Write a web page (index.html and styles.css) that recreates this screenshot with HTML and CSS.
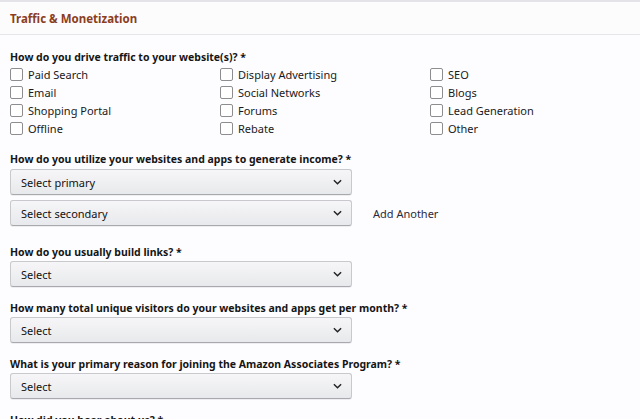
FILE: index.html
```html
<!DOCTYPE html>
<html>
<head>
<meta charset="utf-8">
<link rel="stylesheet" href="styles.css">
</head>
<body>
<div class="page">
  <div class="header"><h2 class="title">Traffic &amp; Monetization</h2></div>
  <div class="body">
    <div class="field traffic">
      <div class="label">How do you drive traffic to your website(s)? *</div>
      <div class="checks">
        <label class="check"><span class="box"></span>Paid Search</label>
        <label class="check"><span class="box"></span>Display Advertising</label>
        <label class="check"><span class="box"></span>SEO</label>
        <label class="check"><span class="box"></span>Email</label>
        <label class="check"><span class="box"></span>Social Networks</label>
        <label class="check"><span class="box"></span>Blogs</label>
        <label class="check"><span class="box"></span>Shopping Portal</label>
        <label class="check"><span class="box"></span>Forums</label>
        <label class="check"><span class="box"></span>Lead Generation</label>
        <label class="check"><span class="box"></span>Offline</label>
        <label class="check"><span class="box"></span>Rebate</label>
        <label class="check"><span class="box"></span>Other</label>
      </div>
    </div>
    <div class="field income">
      <div class="label">How do you utilize your websites and apps to generate income? *</div>
      <div class="select-row"><div class="select"><span>Select primary</span><svg class="chev" viewBox="0 0 10 6"><path d="M1 1 L5 5 L9 1" /></svg></div></div>
      <div class="select-row second"><div class="select"><span>Select secondary</span><svg class="chev" viewBox="0 0 10 6"><path d="M1 1 L5 5 L9 1" /></svg></div><span class="add">Add Another</span></div>
    </div>
    <div class="field">
      <div class="label">How do you usually build links? *</div>
      <div class="select-row"><div class="select"><span>Select</span><svg class="chev" viewBox="0 0 10 6"><path d="M1 1 L5 5 L9 1" /></svg></div></div>
    </div>
    <div class="field">
      <div class="label">How many total unique visitors do your websites and apps get per month? *</div>
      <div class="select-row"><div class="select"><span>Select</span><svg class="chev" viewBox="0 0 10 6"><path d="M1 1 L5 5 L9 1" /></svg></div></div>
    </div>
    <div class="field">
      <div class="label">What is your primary reason for joining the Amazon Associates Program? *</div>
      <div class="select-row"><div class="select"><span>Select</span><svg class="chev" viewBox="0 0 10 6"><path d="M1 1 L5 5 L9 1" /></svg></div></div>
    </div>
    <div class="field">
      <div class="label">How did you hear about us? *</div>
    </div>
  </div>
</div>
</body>
</html>
```
FILE: styles.css
```css
html, body { margin: 0; padding: 0; background: #fdfdff; }
body { font-family: "Noto Sans", "Open Sans", sans-serif; color: #111; font-size: 11px; }
.page { width: 640px; height: 419px; overflow: hidden; border-top: 2px solid #e4e4e8; }
.header { height: 32px; border-bottom: 1px solid #e6e6ea; background: #fcfcfd; display: flex; align-items: center; padding-left: 10px; }
.title { margin: 0; font-size: 11.5px; font-weight: 700; color: #8b3e1e; }
.body { padding: 15px 10px 0 10px; }
.field { margin-bottom: 14px; }
.field.traffic { margin-bottom: 15px; }
.field.income { margin-bottom: 19px; }
.label { font-weight: 700; font-size: 10.5px; line-height: 14px; margin-bottom: 2px; color: #151515; }
.traffic .label { margin-bottom: 1px; }
.income .label { margin-bottom: 3px; }
.checks { display: grid; grid-template-columns: 210px 210px 200px; row-gap: 0; }
.check { display: flex; align-items: center; height: 18px; gap: 5px; color: #1a1a1a; }
.box { border: 1px solid #8d8d90; border-radius: 2px; background: #fff; box-sizing: border-box; width: 13px; height: 13px; }
.select-row { display: flex; align-items: center; }
.select-row.second { margin-top: 5px; }
.select { width: 342px; height: 26px; box-sizing: border-box; border: 1px solid #c8c9cc; border-bottom-color: #a8a9ad; border-radius: 3px; background: linear-gradient(#f6f6f8, #e8e9ec); box-shadow: 0 1px 0 rgba(0,0,0,0.06); display: flex; align-items: center; justify-content: space-between; padding: 0 9px 0 10px; }
.chev { width: 9px; height: 6px; fill: none; stroke: #222; stroke-width: 1.6; }
.add { margin-left: 21px; color: #2a2a3a; }
```
